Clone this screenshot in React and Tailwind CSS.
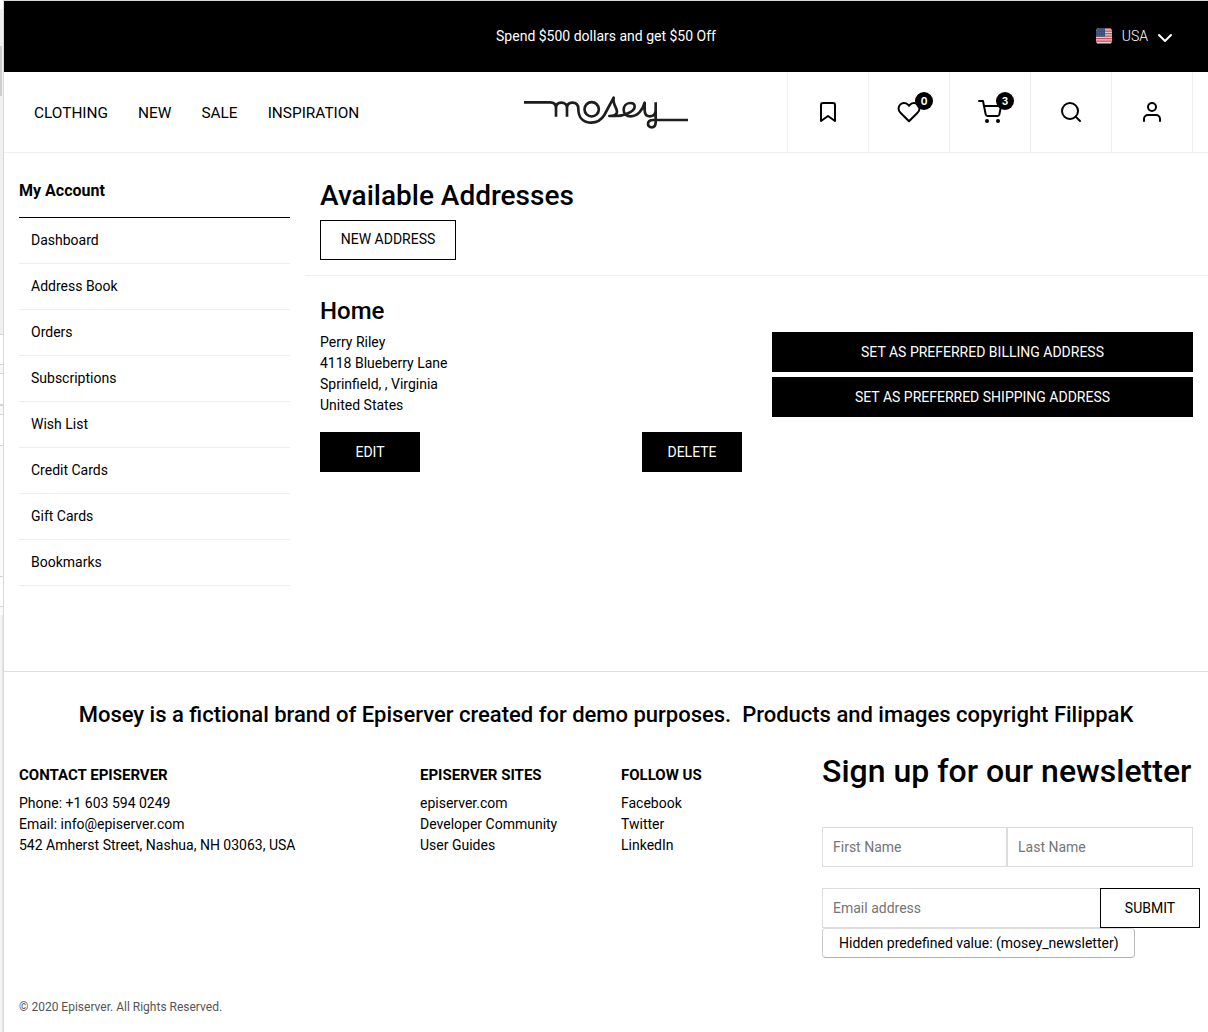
import React from "react";
import { FiBookmark, FiHeart, FiShoppingCart, FiSearch, FiUser, FiChevronDown } from "react-icons/fi";

const font = "font-['Roboto',sans-serif]";

function Flag() {
  return (
    <svg width="16" height="16" viewBox="0 0 16 16" className="-mt-px block">
      <defs>
        <clipPath id="flag"><rect width="16" height="16" rx="3.500" /></clipPath>
      </defs>
      <g clipPath="url(#flag)">
        <rect width="16" height="16" fill="#dccfd0" />
        {[0, 2.5, 5, 7.5, 10, 12.5, 15].map((y) => (
          <rect key={y} y={y} width="16" height="1.25" fill="#c8505c" />
        ))}
        <rect width="9" height="8.6" fill="#3c4f7c" />
        {[1.5, 4.2, 6.8].map((y) =>
          [1.5, 4, 6.5].map((x) => <rect key={x + "-" + y} x={x} y={y} width="1" height="1" fill="#61719a" />)
        )}
      </g>
    </svg>
  );
}

function Logo() {
  return (
    <svg width="190" height="55" viewBox="0 0 570 165" className="block" fill="none" stroke="#1d1d1b" strokeWidth="8" strokeLinejoin="round">
      <path d="M42 52H120C132 52 138 59 138 69V95M138 69C138 57 145 53 154 53C164 53 171 59 171 69V95M171 69C171 57 178 53 187 53C199 53 205 61 205 72C205 98 220 113 244 113C264 113 275 103 283 90L311 38C307 57 321 68 321 80C321 89 313 93 298 93H318C340 93 374 80 374 65C374 57 367 54 361 54C348 54 341 64 341 75C341 87 350 94 362 94C382 94 398 76 404 53V76C404 88 410 94 419 94C431 94 437 87 437 76M437 52V112C437 122 432 127 425 127C418 127 414 122 414 117C414 109 420 105 430 105H534" />
      <circle cx="245" cy="73" r="21.500" />
    </svg>
  );
}

const nav = ["CLOTHING", "NEW", "SALE", "INSPIRATION"];
const menu = ["Dashboard", "Address Book", "Orders", "Subscriptions", "Wish List", "Credit Cards", "Gift Cards", "Bookmarks"];
const tools = [[FiBookmark], [FiHeart, "0"], [FiShoppingCart, "3"], [FiSearch], [FiUser]];

function Links({ className, title, items }) {
  return (
    <div className={className}>
      <h3 className="mb-[7px] text-[15px] leading-[21px] font-bold">{title}</h3>
      {items.map((t) => <p key={t}>{t}</p>)}
    </div>
  );
}

function Edge() {
  return (
    <div className="flex h-[1032px] w-1 shrink-0 flex-col border-r border-[#d9d9d9] bg-[#f8f8f8]">
      <div className="h-[9px] bg-white" />
      <div className="h-[37px] bg-[#f0f0f0]" />
      <div className="h-[50px] border-r border-[#f0f0f0] bg-[#cdcdcd]" />
      <div className="h-[238px] bg-[#f0f0f0]" />
      <div className="h-[31px] border-y border-[#d4d4d4] bg-white" />
      <div className="h-[9px] border-b border-[#d4d4d4]" />
      <div className="h-[32px] border-b-2 border-[#d4d4d4] bg-white" />
      <div className="h-[9px] border-b border-[#d4d4d4]" />
      <div className="h-[31px] border-b border-[#d4d4d4] bg-white" />
      <div className="h-[131px] border-b border-[#d4d4d4] bg-[#fafafa]" />
      <div className="h-[30px] border-b border-[#d4d4d4] bg-white" />
      <div className="h-[8px] bg-[#fafafa]" />
      <div className="flex-1 border-r border-[#e4e4e4] bg-[#f3f3f3]" />
    </div>
  );
}

export default function App() {
  return (
    <div className={`flex h-[1032px] w-[1208px] overflow-hidden bg-white text-[14px] leading-[21px] text-black ${font}`}>
      <Edge />
      <div className="flex min-w-0 flex-1 flex-col border-t border-[#d9d9d9]">
        <div className="grid h-[71px] shrink-0 grid-cols-3 items-center bg-black text-white">
          <span />
          <span className="text-center whitespace-nowrap">Spend $500 dollars and get $50 Off</span>
          <div className="flex items-center justify-end pr-[31px]">
            <Flag />
            <span className="ml-[10px] font-light">USA</span>
            <FiChevronDown className="mt-[3px] ml-[5px]" size={24} />
          </div>
        </div>
        <header className="flex h-[81px] shrink-0 border-b border-[#eeeeee]">
          <nav className="flex w-[506px] items-center gap-[30px] pt-[2px] pl-[30px] text-[15.4px]">
            {nav.map((t) => <span key={t}>{t}</span>)}
          </nav>
          <div className="mt-[13px] w-[277px]"><Logo /></div>
          <div className="flex">
            {tools.map(([Icon, n], i) => (
              <div key={i} className="flex w-[81px] items-center justify-center border-l border-[#eeeeee]">
                <div className="relative">
                  <Icon size={24} className="block" />
                  {n && <span className="absolute -top-2 left-[18px] flex size-[18px] items-center justify-center rounded-full bg-black font-['Inter',sans-serif] text-[10px] leading-none font-bold text-white">{n}</span>}
                </div>
              </div>
            ))}
            <div className="border-l border-[#eeeeee]" />
          </div>
        </header>
        <main className="flex h-[518px] shrink-0">
          <aside className="ml-[15px] w-[271px]">
            <h2 className="h-[65px] border-b border-black pt-[26px] text-[16px] leading-6 font-bold">My Account</h2>
            {menu.map((t) => (
              <div key={t} className="h-[46px] border-b border-[#eeeeee] pt-3 pl-3">{t}</div>
            ))}
          </aside>
          <section className="ml-[15px] flex-1">
            <div className="h-[123px] border-b border-[#eeeeee] pt-[26px] pl-[15px]">
              <h1 className="mb-[8px] text-[28px] leading-[33px] font-medium">Available Addresses</h1>
              <button className="flex h-[40px] w-[136px] items-start justify-center border border-black pt-[8px]">NEW ADDRESS</button>
            </div>
            <div className="flex px-[15px]">
              <div className="mr-[30px] w-[422px] pt-[21px]">
                <h2 className="mb-[6px] text-[24px] leading-[29px] font-medium">Home</h2>
                <p>Perry Riley</p>
                <p>4118 Blueberry Lane</p>
                <p>Sprinfield, , Virginia</p>
                <p>United States</p>
                <div className="mt-4 flex justify-between text-white">
                  <button className="h-10 w-[100px] bg-black">EDIT</button>
                  <button className="h-10 w-[100px] bg-black">DELETE</button>
                </div>
              </div>
              <div className="flex flex-1 flex-col gap-[5px] pt-[56px] text-white">
                <button className="h-10 bg-black">SET AS PREFERRED BILLING ADDRESS</button>
                <button className="h-10 bg-black">SET AS PREFERRED SHIPPING ADDRESS</button>
              </div>
            </div>
          </section>
        </main>
        <footer className="flex-1 border-t border-[#dedede]">
          <h2 className="mt-[29px] h-[51px] text-center text-[22px] leading-[27px] font-medium whitespace-pre">Mosey is a fictional brand of Episerver created for demo purposes.  Products and images copyright FilippaK</h2>
          <div className="flex h-[246px] pl-[15px]">
            <Links className="mt-[13px] w-[401px]" title="CONTACT EPISERVER" items={["Phone: +1 603 594 0249", "Email: info@episerver.com", "542 Amherst Street, Nashua, NH 03063, USA"]} />
            <Links className="mt-[13px] w-[201px]" title="EPISERVER SITES" items={["episerver.com", "Developer Community", "User Guides"]} />
            <Links className="mt-[13px] w-[201px]" title="FOLLOW US" items={["Facebook", "Twitter", "LinkedIn"]} />
            <div className="w-[378px]">
              <h2 className="h-[75px] text-[32px] leading-[38px] font-medium whitespace-nowrap">Sign up for our newsletter</h2>
              <div className="flex w-[371px] text-[#757575]">
                <div className="h-10 w-[185px] border border-[#dcdcdc] px-[10px] leading-[38px]">First Name</div>
                <div className="h-10 w-[186px] border border-[#dcdcdc] px-[10px] leading-[38px]">Last Name</div>
              </div>
              <div className="mt-[21px] flex">
                <div className="h-10 w-[278px] border border-r-0 border-[#dcdcdc] px-[10px] leading-[38px] text-[#757575]">Email address</div>
                <button className="h-10 w-[100px] border border-black">SUBMIT</button>
              </div>
              <div className="h-[30px] w-[313px] rounded-[4px] border border-t-[#dcdcdc] border-r-[#b8b8b8] border-b-[#b0b0b0] border-l-[#cccccc] px-4 leading-7 whitespace-nowrap">Hidden predefined value: (mosey_newsletter)</div>
            </div>
          </div>
          <p className="text-[12px] leading-[18px] text-[#555555]">
            <span className="ml-[15px]">© 2020 Episerver. All Rights Reserved.</span>
          </p>
        </footer>
      </div>
    </div>
  );
}
